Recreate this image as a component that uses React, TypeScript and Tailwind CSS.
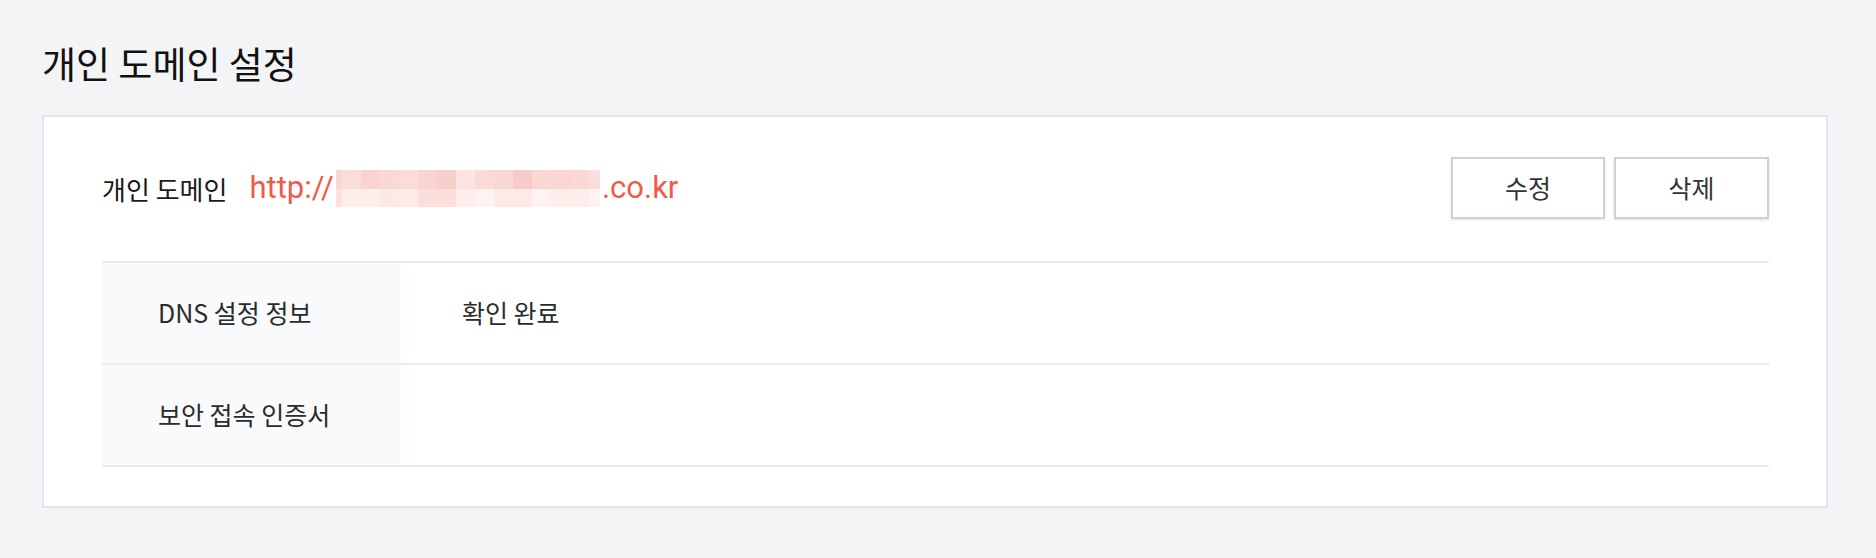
import React from 'react';

const topBlocks = [
  'bg-[#fadcd8]', 'bg-[#f9d3cf]', 'bg-[#fad9d5]', 'bg-[#fbdcd8]', 'bg-[#f9d5d0]',
  'bg-[#f8d0cb]', 'bg-[#fce4e1]', 'bg-[#fadad6]', 'bg-[#f9d7d2]', 'bg-[#f7ccc6]',
  'bg-[#fad9d5]', 'bg-[#f9d6d1]', 'bg-[#fad8d4]', 'bg-[#fbdedb]',
];

const bottomBlocks = [
  'bg-[#fdeeec]', 'bg-[#fdeeec]', 'bg-[#fce8e6]', 'bg-[#fdebe9]', 'bg-[#fcdeda]',
  'bg-[#fcdeda]', 'bg-[#fdeeec]', 'bg-[#fef3f2]', 'bg-[#fdeae8]', 'bg-[#fdeae8]',
  'bg-[#fef3f2]', 'bg-[#fdeeec]', 'bg-[#fdeeec]', 'bg-[#fef3f2]',
];

// pixelated (masked) part of the domain
function MaskedDomain() {
  return (
    <span className="flex h-[37px] mx-[2px]">
      <span className="w-[6px] flex flex-col">
        <span className="h-[19px] bg-[#f9d6d1]"></span>
        <span className="h-[18px] bg-[#fbe1de]"></span>
      </span>
      <span className="flex flex-col">
        <span className="flex h-[19px]">
          {topBlocks.map((c, i) => (
            <span key={i} className={`${c} ${i === 13 ? 'w-[11px]' : 'w-[19px]'}`}></span>
          ))}
        </span>
        <span className="flex h-[18px]">
          {bottomBlocks.map((c, i) => (
            <span key={i} className={`${c} ${i === 13 ? 'w-[11px]' : 'w-[19px]'}`}></span>
          ))}
        </span>
      </span>
    </span>
  );
}

function InfoRow({ label, value }: { label: string; value?: string }) {
  return (
    <div className="flex h-[102px] border-b-2 border-[#ebecf0]">
      <div className="w-[299px] bg-[#f9fafc] pl-[56px] flex items-center text-[25px] text-[#2b2b2b]">
        {label}
      </div>
      <div className="flex-1 pl-[61px] flex items-center text-[25px] text-[#2b2b2b]">
        {value}
      </div>
    </div>
  );
}

export default function App() {
  return (
    <div className="min-h-[558px] bg-[#f3f4f6] pl-[42px] pr-[48px] pt-[43px] font-['Noto_Sans_CJK_KR','Noto_Sans',sans-serif]">
      <h1 className="text-[37px] leading-[41px] text-[#111111] mb-[31px]">
        개인 도메인 설정
      </h1>

      <div className="bg-white border-2 border-[#e2e5ee] pt-[40px] pb-[39px] pl-[58px] pr-[57px]">
        {/* domain header */}
        <div className="flex items-center justify-between h-[62px]">
          <div className="flex items-center">
            <span className="text-[26px] text-[#1a1a1a] mr-[22px]">개인 도메인</span>
            <span className="flex items-center font-['Roboto',sans-serif] text-[31px] text-[#ef5b49]">
              <span>http://</span>
              <MaskedDomain />
              <span>.co.kr</span>
            </span>
          </div>
          <div className="flex gap-[9px]">
            <button className="w-[154px] h-[62px] bg-white border-2 border-[#cdd1dc] shadow-[0_1px_2px_rgba(0,0,0,0.12)] text-[25px] text-[#333333]">
              수정
            </button>
            <button className="w-[155px] h-[62px] bg-white border-2 border-[#cdd1dc] shadow-[0_1px_2px_rgba(0,0,0,0.12)] text-[25px] text-[#333333]">
              삭제
            </button>
          </div>
        </div>

        {/* info table */}
        <div className="mt-[42px] border-t-2 border-[#ebecf0]">
          <InfoRow label="DNS 설정 정보" value="확인 완료" />
          <InfoRow label="보안 접속 인증서" />
        </div>
      </div>
    </div>
  );
}
